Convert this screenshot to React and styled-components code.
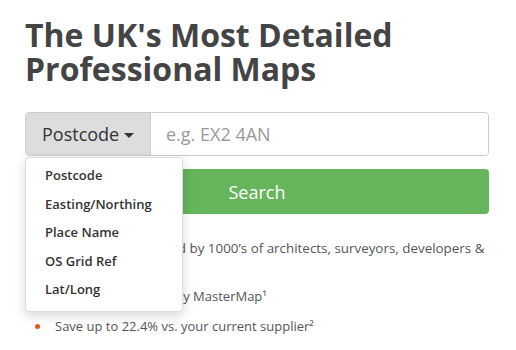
import React from "react";
import styled, { createGlobalStyle } from "styled-components";

const GlobalStyle = createGlobalStyle`
  html, body {
    margin: 0;
    padding: 0;
    background: #fff;
  }
  body {
    font-family: "Open Sans", "Liberation Sans", sans-serif;
    color: #555;
  }
`;

const Page = styled.div`
  width: 464px;
  padding: 18px 27px 0 25px;
  overflow: hidden;
  height: 332px;
`;

const Title = styled.h1`
  margin: 0 0 26px;
  font-size: 32px;
  line-height: 34px;
  font-weight: 700;
  color: #444;
`;

const SearchForm = styled.form`
  display: flex;
  flex-direction: column;
  gap: 13px;
  margin: 0;
`;

const InputGroup = styled.div`
  position: relative;
  display: flex;
  height: 44px;
  border: 1px solid #ccc;
  border-radius: 4px;
  box-sizing: border-box;
`;

const Addon = styled.button`
  display: flex;
  align-items: center;
  gap: 5px;
  width: 125px;
  padding: 0 0 0 16px;
  box-sizing: border-box;
  border: 0;
  border-right: 1px solid #ccc;
  border-radius: 3px 0 0 3px;
  background: #dddddd;
  font-family: inherit;
  font-size: 18px;
  color: #333;
  cursor: pointer;
`;

const Caret = styled.span`
  width: 0;
  height: 0;
  border-left: 5px solid transparent;
  border-right: 5px solid transparent;
  border-top: 5px solid #333;
  margin-top: 2px;
`;

const Field = styled.input`
  flex: 1;
  min-width: 0;
  border: 0;
  border-radius: 0 4px 4px 0;
  padding: 0 15px;
  font-family: inherit;
  font-size: 18px;
  color: #333;
  outline: none;
  &::placeholder {
    color: #999;
  }
`;

const Menu = styled.ul`
  position: absolute;
  top: 44px;
  left: -1px;
  z-index: 10;
  width: 158px;
  box-sizing: border-box;
  margin: 0;
  padding: 3px 0 7px;
  list-style: none;
  background: #fff;
  border: 1px solid #ddd;
  border-radius: 4px;
  box-shadow: 0 4px 12px rgba(0, 0, 0, 0.16);
`;

const MenuItem = styled.li`
  padding: 0 19px;
  height: 28.5px;
  line-height: 28.5px;
  font-size: 13px;
  font-weight: 600;
  color: #333;
  white-space: nowrap;
`;

const SearchButton = styled.button`
  height: 45px;
  border: 0;
  border-radius: 4px;
  background: #66b45b;
  color: #fff;
  font-family: inherit;
  font-size: 18px;
  cursor: pointer;
`;

const Intro = styled.p`
  margin: 22px 0 0;
  font-size: 13.4px;
  line-height: 24px;
  color: #555;
`;

const Points = styled.ul`
  margin: 0;
  padding: 0;
  list-style: none;
`;

const Point = styled.li`
  display: flex;
  align-items: center;
  gap: 15px;
  padding-left: 10px;
  height: 24px;
  margin-bottom: 6px;
  font-size: 13px;
  color: #555;
  &::before {
    content: "";
    flex: none;
    width: 5px;
    height: 5px;
    border-radius: 50%;
    background: #e4541f;
  }
`;

const options = ["Postcode", "Easting/Northing", "Place Name", "OS Grid Ref", "Lat/Long"];

export default function App() {
  return (
    <>
      <GlobalStyle />
      <Page>
        <Title>
          The UK's Most Detailed
          <br />
          Professional Maps
        </Title>
        <SearchForm onSubmit={(e) => e.preventDefault()}>
          <InputGroup>
            <Addon type="button">
              Postcode <Caret />
            </Addon>
            <Field placeholder="e.g. EX2 4AN" />
            <Menu>
              {options.map((o) => (
                <MenuItem key={o}>{o}</MenuItem>
              ))}
            </Menu>
          </InputGroup>
          <SearchButton type="submit">Search</SearchButton>
        </SearchForm>
        <Intro>
          Our mapping data is used by 1000’s of architects, surveyors, developers &amp; planners.
        </Intro>
        <Points>
          <Point>New Ordnance Survey MasterMap¹</Point>
          <Point>Save up to 22.4% vs. your current supplier²</Point>
        </Points>
      </Page>
    </>
  );
}
